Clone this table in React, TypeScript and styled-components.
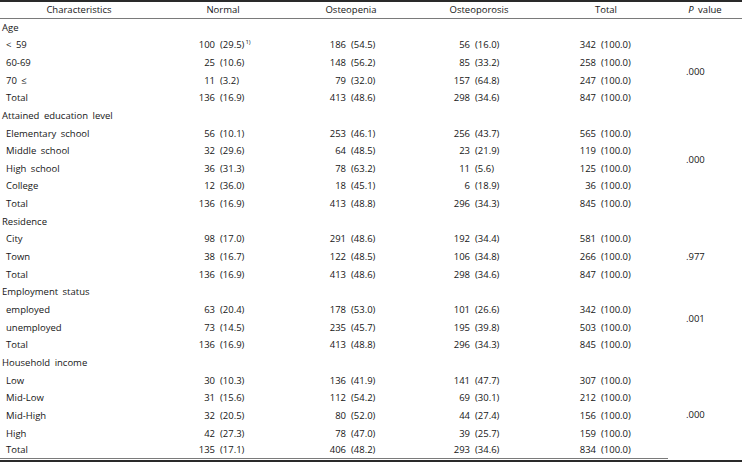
import React from 'react';
import styled, { createGlobalStyle } from 'styled-components';

const Global = createGlobalStyle`
  html, body { margin: 0; padding: 0; background: #ffffff; }
  body {
    font-family: "Open Sans", "Noto Sans", "DejaVu Sans", sans-serif;
    color: #161616;
  }
`;

const Frame = styled.div`
  width: 742px;
  border-top: 2px solid #2a2a2a;
  border-bottom: 2px solid #2a2a2a;
  padding-bottom: 1px;
`;

const Table = styled.table`
  width: 742px;
  border-collapse: collapse;
  border-spacing: 0;
  table-layout: fixed;
  font-size: 9.5px;
  line-height: 1;
`;

const HeadCell = styled.th`
  height: 16px;
  padding: 0;
  font-weight: 400;
  text-align: center;
  vertical-align: middle;
  white-space: nowrap;
  border-bottom: 1px solid #7a7a7a;
  word-spacing: 2px;
`;

const Row = styled.tr<{ $last?: boolean }>`
  height: ${(p) => (p.$last ? '16px' : '17.66px')};
  & > td {
    border-bottom: ${(p) => (p.$last ? '1px solid #7a7a7a' : 'none')};
  }
`;

const LabelCell = styled.td<{ $indent: number }>`
  padding: 0 0 0 ${(p) => p.$indent}px;
  white-space: nowrap;
  vertical-align: middle;
  word-spacing: 2px;
`;

const ValueCell = styled.td`
  padding: 0;
  vertical-align: middle;
`;

const Pair = styled.div<{ $edge: number }>`
  display: grid;
  grid-template-columns: ${(p) => p.$edge}px auto;
  column-gap: 5px;
  white-space: nowrap;
`;

const Count = styled.span`
  text-align: right;
`;

const Pct = styled.span`
  text-align: left;
`;

const Sup = styled.sup`
  font-size: 6px;
  vertical-align: 4px;
  line-height: 0;
  margin-left: 1px;
`;

const PCell = styled.td`
  padding: 0 0 0 18px;
  vertical-align: middle;
  white-space: nowrap;
`;

type V = [string, string, boolean?];
type R = { label: string; v: V[] };
type G = { title: string; p: string; withHeader: boolean; rows: R[] };

const groups: G[] = [
  {
    title: 'Age',
    p: '.000',
    withHeader: false,
    rows: [
      { label: '< 59', v: [['100', '29.5', true], ['186', '54.5'], ['56', '16.0'], ['342', '100.0']] },
      { label: '60-69', v: [['25', '10.6'], ['148', '56.2'], ['85', '33.2'], ['258', '100.0']] },
      { label: '70 \u2264', v: [['11', '3.2'], ['79', '32.0'], ['157', '64.8'], ['247', '100.0']] },
      { label: 'Total', v: [['136', '16.9'], ['413', '48.6'], ['298', '34.6'], ['847', '100.0']] },
    ],
  },
  {
    title: 'Attained education level',
    p: '.000',
    withHeader: true,
    rows: [
      { label: 'Elementary school', v: [['56', '10.1'], ['253', '46.1'], ['256', '43.7'], ['565', '100.0']] },
      { label: 'Middle school', v: [['32', '29.6'], ['64', '48.5'], ['23', '21.9'], ['119', '100.0']] },
      { label: 'High school', v: [['36', '31.3'], ['78', '63.2'], ['11', '5.6'], ['125', '100.0']] },
      { label: 'College', v: [['12', '36.0'], ['18', '45.1'], ['6', '18.9'], ['36', '100.0']] },
      { label: 'Total', v: [['136', '16.9'], ['413', '48.8'], ['296', '34.3'], ['845', '100.0']] },
    ],
  },
  {
    title: 'Residence',
    p: '.977',
    withHeader: false,
    rows: [
      { label: 'City', v: [['98', '17.0'], ['291', '48.6'], ['192', '34.4'], ['581', '100.0']] },
      { label: 'Town', v: [['38', '16.7'], ['122', '48.5'], ['106', '34.8'], ['266', '100.0']] },
      { label: 'Total', v: [['136', '16.9'], ['413', '48.6'], ['298', '34.6'], ['847', '100.0']] },
    ],
  },
  {
    title: 'Employment status',
    p: '.001',
    withHeader: true,
    rows: [
      { label: 'employed', v: [['63', '20.4'], ['178', '53.0'], ['101', '26.6'], ['342', '100.0']] },
      { label: 'unemployed', v: [['73', '14.5'], ['235', '45.7'], ['195', '39.8'], ['503', '100.0']] },
      { label: 'Total', v: [['136', '16.9'], ['413', '48.8'], ['296', '34.3'], ['845', '100.0']] },
    ],
  },
  {
    title: 'Household income',
    p: '.000',
    withHeader: false,
    rows: [
      { label: 'Low', v: [['30', '10.3'], ['136', '41.9'], ['141', '47.7'], ['307', '100.0']] },
      { label: 'Mid-Low', v: [['31', '15.6'], ['112', '54.2'], ['69', '30.1'], ['212', '100.0']] },
      { label: 'Mid-High', v: [['32', '20.5'], ['80', '52.0'], ['44', '27.4'], ['156', '100.0']] },
      { label: 'High', v: [['42', '27.3'], ['78', '47.0'], ['39', '25.7'], ['159', '100.0']] },
      { label: 'Total', v: [['135', '17.1'], ['406', '48.2'], ['293', '34.6'], ['834', '100.0']] },
    ],
  },
];

const edges = [57, 58, 56, 52];
const widths = [158, 130, 126, 130, 124, 74];

export default function App() {
  return (
    <>
      <Global />
      <Frame>
        <Table>
          <colgroup>
            {widths.map((w, i) => (
              <col key={i} style={{ width: w }} />
            ))}
          </colgroup>
          <thead>
            <tr>
              <HeadCell>Characteristics</HeadCell>
              <HeadCell>Normal</HeadCell>
              <HeadCell>Osteopenia</HeadCell>
              <HeadCell>Osteoporosis</HeadCell>
              <HeadCell>Total</HeadCell>
              <HeadCell>
                <i>P</i> value
              </HeadCell>
            </tr>
          </thead>
          <tbody>
            {groups.map((g, gi) => {
              const lastGroup = gi === groups.length - 1;
              const span = g.rows.length + (g.withHeader ? 1 : 0);
              return (
                <React.Fragment key={g.title}>
                  <Row>
                    <LabelCell $indent={2}>{g.title}</LabelCell>
                    <ValueCell />
                    <ValueCell />
                    <ValueCell />
                    <ValueCell />
                    {g.withHeader ? <PCell rowSpan={span}>{g.p}</PCell> : <ValueCell />}
                  </Row>
                  {g.rows.map((r, ri) => (
                    <Row key={ri} $last={lastGroup && ri === g.rows.length - 1}>
                      <LabelCell $indent={6}>{r.label}</LabelCell>
                      {r.v.map((v, vi) => (
                        <ValueCell key={vi}>
                          <Pair $edge={edges[vi]}>
                            <Count>{v[0]}</Count>
                            <Pct>
                              ({v[1]}){v[2] ? <Sup>1)</Sup> : null}
                            </Pct>
                          </Pair>
                        </ValueCell>
                      ))}
                      {!g.withHeader && ri === 0 ? <PCell rowSpan={span}>{g.p}</PCell> : null}
                    </Row>
                  ))}
                </React.Fragment>
              );
            })}
          </tbody>
        </Table>
      </Frame>
    </>
  );
}
